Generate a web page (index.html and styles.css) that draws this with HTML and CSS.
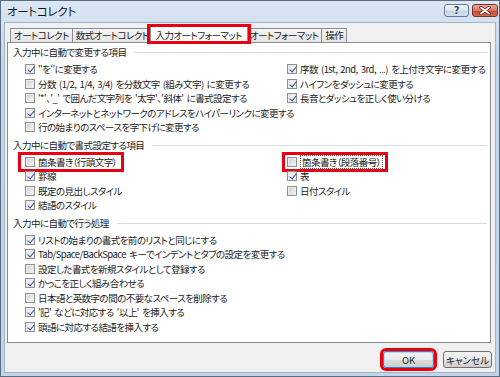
FILE: index.html
```html
<!DOCTYPE html>
<html lang="ja">
<head>
    <meta charset="UTF-8">
    <title>オートコレクト</title>
    <link rel="stylesheet" href="styles.css">
</head>
<body>

    <div class="window">
        <div class="titlebar">
            <span class="title">オートコレクト</span>
            <div class="caption-btns">
                <span class="cap-btn help">?</span>
                <span class="cap-btn close">
                    <svg width="12" height="9" viewBox="0 0 12 9">
                        <path d="M2 1.5 L10 7.5 M10 1.5 L2 7.5" stroke="#5e1c12" stroke-width="3.4" stroke-linecap="round"/>
                        <path d="M2 1.5 L10 7.5 M10 1.5 L2 7.5" stroke="#fff" stroke-width="1.8" stroke-linecap="round"/>
                    </svg>
                </span>
            </div>
        </div>

        <div class="client">
            <div class="tabs">
                <span class="tab">オートコレクト</span>
                <span class="tab">数式オートコレクト</span>
                <span class="tab active">入力オートフォーマット</span>
                <span class="tab">オートフォーマット</span>
                <span class="tab">操作</span>
            </div>

            <div class="panel">
                <div class="group">
                    <div class="group-title"><span>入力中に自動で変更する項目</span></div>
                    <div class="opts">
                        <div class="col">
                            <div class="opt"><span class="cb on"></span>''を‘’に変更する</div>
                            <div class="opt"><span class="cb"></span>分数 (1/2, 1/4, 3/4) を分数文字 (組み文字) に変更する</div>
                            <div class="opt"><span class="cb"></span>'*'、'_' で囲んだ文字列を '太字'、'斜体' に書式設定する</div>
                            <div class="opt"><span class="cb on"></span>インターネットとネットワークのアドレスをハイパーリンクに変更する</div>
                            <div class="opt"><span class="cb"></span>行の始まりのスペースを字下げに変更する</div>
                        </div>
                        <div class="col">
                            <div class="opt"><span class="cb on"></span>序数 (1st, 2nd, 3rd, ...) を上付き文字に変更する</div>
                            <div class="opt"><span class="cb on"></span>ハイフンをダッシュに変更する</div>
                            <div class="opt"><span class="cb on"></span>長音とダッシュを正しく使い分ける</div>
                        </div>
                    </div>
                </div>

                <div class="group">
                    <div class="group-title"><span>入力中に自動で書式設定する項目</span></div>
                    <div class="opts">
                        <div class="col">
                            <div class="opt hl"><span class="cb"></span>箇条書き（行頭文字）</div>
                            <div class="opt"><span class="cb on"></span>罫線</div>
                            <div class="opt"><span class="cb"></span>既定の見出しスタイル</div>
                            <div class="opt"><span class="cb on"></span>結語のスタイル</div>
                        </div>
                        <div class="col">
                            <div class="opt hl hl-right"><span class="cb"></span><span class="focus">箇条書き（段落番号）</span></div>
                            <div class="opt"><span class="cb on"></span>表</div>
                            <div class="opt"><span class="cb"></span>日付スタイル</div>
                        </div>
                    </div>
                </div>

                <div class="group">
                    <div class="group-title"><span>入力中に自動で行う処理</span></div>
                    <div class="opts single">
                        <div class="col">
                            <div class="opt"><span class="cb on"></span>リストの始まりの書式を前のリストと同じにする</div>
                            <div class="opt"><span class="cb on"></span>Tab/Space/BackSpace キーでインデントとタブの設定を変更する</div>
                            <div class="opt"><span class="cb"></span>設定した書式を新規スタイルとして登録する</div>
                            <div class="opt"><span class="cb on"></span>かっこを正しく組み合わせる</div>
                            <div class="opt"><span class="cb"></span>日本語と英数字の間の不要なスペースを削除する</div>
                            <div class="opt"><span class="cb on"></span>'記' などに対応する '以上' を挿入する</div>
                            <div class="opt"><span class="cb on"></span>頭語に対応する結語を挿入する</div>
                        </div>
                    </div>
                </div>
            </div>

            <div class="actions">
                <button class="btn ok">OK</button>
                <button class="btn cancel">キャンセル</button>
            </div>
        </div>
    </div>

</body>
</html>
```

FILE: styles.css
```css
* {
    box-sizing: border-box;
}

body {
    margin: 0;
    width: 500px;
    height: 377px;
    font-family: "Noto Sans CJK JP", "Noto Sans", sans-serif;
    font-size: 9.5px;
    letter-spacing: -0.55px;
    word-spacing: 1.5px;
    font-feature-settings: "palt";
    color: #1b1b1b;
    background: #fff;
}

.window {
    width: 500px;
    height: 377px;
    border: 1px solid #5b6c80;
    background: linear-gradient(#dbe7f4, #c5d6ea 60px, #c3d4e8);
    display: flex;
    flex-direction: column;
}

/* title bar */

.titlebar {
    height: 21px;
    flex-shrink: 0;
    display: flex;
    justify-content: space-between;
    align-items: flex-start;
}

.title {
    font-size: 11.5px;
    letter-spacing: -0.3px;
    line-height: 21px;
    padding-left: 6px;
    color: #111;
}

.caption-btns {
    display: flex;
    gap: 3px;
    margin: 3px 1px 0 0;
}

.cap-btn {
    width: 25px;
    height: 13px;
    border: 1px solid #6b7c93;
    border-radius: 3px;
    display: flex;
    align-items: center;
    justify-content: center;
}

.cap-btn.help {
    background: linear-gradient(#f1f5fa, #dbe5f0 50%, #c6d3e3 51%, #d2deec);
    color: #3a4f6e;
    font: bold 10px "DejaVu Sans", sans-serif;
    text-shadow: 0 0 2px #fff;
}

.cap-btn.close {
    width: 26px;
    border-color: #7b3025;
    background: linear-gradient(#e8aa98, #d67862 50%, #c44833 51%, #d46a50);
}

/* client area */

.client {
    flex: 1;
    margin: 0 3px 3px;
    border: 1px solid #a3b3c6;
    background: #f0f0f0;
    display: flex;
    flex-direction: column;
}

.tabs {
    height: 20px;
    display: flex;
    align-items: flex-end;
    padding-left: 5px;
    position: relative;
    z-index: 1;
}

.tab {
    height: 14px;
    margin: 0 -1px 1px 0;
    padding: 0 3px;
    line-height: 13px;
    border: 1px solid #898c95;
    border-bottom: none;
    background: linear-gradient(#f4f4f4, #e4e4e4);
    white-space: nowrap;
}

.tab.active {
    height: 17px;
    margin: 0 -2px 0 -2px;
    padding: 0 5px;
    line-height: 16px;
    background: #fff;
    position: relative;
    z-index: 1;
}

.tab.active::after {
    content: "";
    position: absolute;
    left: -4px;
    right: -4px;
    top: -3px;
    bottom: -1px;
    border: 3px solid #e60012;
}

.panel {
    height: 301px;
    margin: -1px 4px 0 2px;
    padding: 2px 0 0 5px;
    background: #fff;
    border: 1px solid #898c95;
}

/* option groups */

.group + .group {
    margin-top: 3px;
}

.group-title {
    display: flex;
    align-items: center;
    height: 14px;
    margin-bottom: 3px;
    white-space: nowrap;
}

.group-title::after {
    content: "";
    flex: 1;
    height: 1px;
    margin: 1px 3px 0 8px;
    background: #d5dde6;
}

.opts {
    display: grid;
    grid-template-columns: 262px 1fr;
    padding-left: 12px;
}

.opts.single {
    grid-template-columns: 1fr;
}

.opt {
    display: flex;
    align-items: center;
    height: 14.5px;
    white-space: pre;
}

.opt.hl {
    width: fit-content;
    margin-left: -4px;
    padding: 0 4px;
    outline: 3px solid #e60012;
}

.opt.hl-right {
    margin-left: -2px;
    padding: 0 2px;
}

.focus {
    border: 1px dotted #555;
    padding: 0 1px;
    line-height: 12px;
}

.cb {
    width: 10px;
    height: 10px;
    flex-shrink: 0;
    margin-right: 3px;
    border: 1px solid #8e8f8f;
    background: linear-gradient(135deg, #d0d0d0, #f6f6f6);
    box-shadow: inset 0 0 0 1px #ececec;
    position: relative;
}

.cb.on {
    background: linear-gradient(135deg, #e4e4e4, #fbfbfb);
}

.cb.on::after {
    content: "";
    position: absolute;
    left: 3px;
    top: 0;
    width: 3px;
    height: 6px;
    border: solid #2d4c9c;
    border-width: 0 1.5px 1.5px 0;
    transform: rotate(40deg);
}

/* buttons */

.actions {
    display: flex;
    justify-content: flex-end;
    gap: 9px;
    padding: 8px 3px 0 0;
}

.btn {
    height: 17px;
    padding: 0;
    font: inherit;
    color: #1b1b1b;
    border: 1px solid #707070;
    border-radius: 3px;
    background: linear-gradient(#f2f2f2, #ebebeb 50%, #dddddd 51%, #cfcfcf);
}

.btn.ok {
    width: 51px;
    border-color: #3c7fb1;
    box-shadow: inset 0 0 0 1px #a8dcf6;
    outline: 3px solid #e60012;
}

.btn.cancel {
    width: 49px;
}
```
